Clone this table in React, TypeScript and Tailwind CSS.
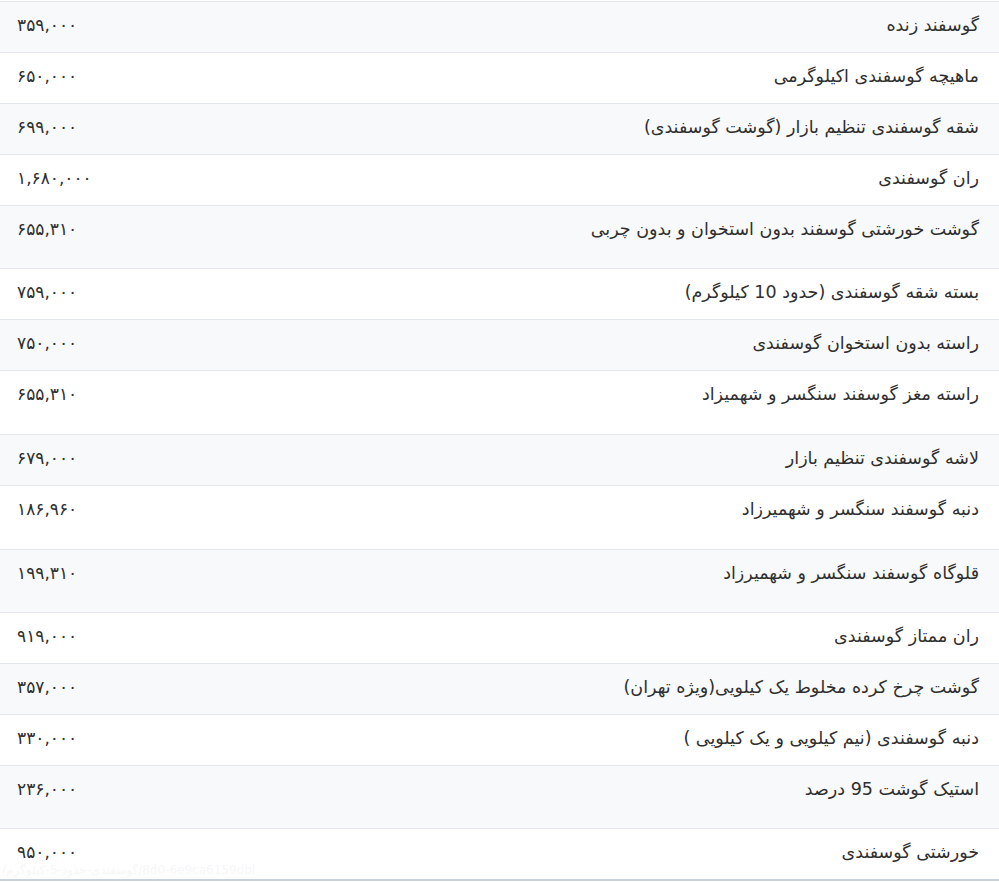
import React from "react";

type Item = { name: string; price: string; tall?: boolean };

const items: Item[] = [
  { name: "گوسفند زنده", price: "۳۵۹,۰۰۰" },
  { name: "ماهیچه گوسفندی اکیلوگرمی", price: "۶۵۰,۰۰۰" },
  { name: "شقه گوسفندی تنظیم بازار (گوشت گوسفندی)", price: "۶۹۹,۰۰۰" },
  { name: "ران گوسفندی", price: "۱,۶۸۰,۰۰۰" },
  { name: "گوشت خورشتی گوسفند بدون استخوان و بدون چربی", price: "۶۵۵,۳۱۰", tall: true },
  { name: "بسته شقه گوسفندی (حدود 10 کیلوگرم)", price: "۷۵۹,۰۰۰" },
  { name: "راسته بدون استخوان گوسفندی", price: "۷۵۰,۰۰۰" },
  { name: "راسته مغز گوسفند سنگسر و شهمیزاد", price: "۶۵۵,۳۱۰", tall: true },
  { name: "لاشه گوسفندی تنظیم بازار", price: "۶۷۹,۰۰۰" },
  { name: "دنبه گوسفند سنگسر و شهمیرزاد", price: "۱۸۶,۹۶۰", tall: true },
  { name: "قلوگاه گوسفند سنگسر و شهمیرزاد", price: "۱۹۹,۳۱۰", tall: true },
  { name: "ران ممتاز گوسفندی", price: "۹۱۹,۰۰۰" },
  { name: "گوشت چرخ کرده مخلوط یک کیلویی(ویژه تهران)", price: "۳۵۷,۰۰۰" },
  { name: "دنبه گوسفندی (نیم کیلویی و یک کیلویی )", price: "۳۳۰,۰۰۰" },
  { name: "استیک گوشت 95 درصد", price: "۲۳۶,۰۰۰", tall: true },
  { name: "خورشتی گوسفندی", price: "۹۵۰,۰۰۰" },
];

export default function App() {
  return (
    <div
      className="relative w-[999px] h-[882px] bg-white overflow-hidden text-[#2f2f2f]"
      style={{ fontFamily: '"DejaVu Sans", "Noto Sans Arabic", sans-serif' }}
    >
      <div dir="rtl" className="pt-[1px] flex flex-col border-b-2 border-[#c8d1de]">
        {items.map((it, i) => (
          <div
            key={i}
            className={
              "flex justify-between items-start border-t border-[#e3e6ea] pr-[20px] pl-[17px] pt-[10px] " +
              (i % 2 === 0 ? "bg-[#f8f9fa] " : "bg-white ") +
              (it.tall ? (i % 2 === 0 ? "h-[63px]" : "h-[64px]") : "h-[51px]")
            }
          >
            <span className="text-[17.5px] leading-[27px]">{it.name}</span>
            <span dir="ltr" className="text-[17px] leading-[27px]">
              {it.price}
            </span>
          </div>
        ))}
      </div>
      <div
        dir="rtl"
        className="absolute left-[2px] top-[863px] text-left text-[12px] leading-[14px] text-[#f6f7f8] whitespace-nowrap"
      >
        8d0-6e9ca6159dbl/گوسفندی-حدود-5-کیلوگرم/
      </div>
    </div>
  );
}
